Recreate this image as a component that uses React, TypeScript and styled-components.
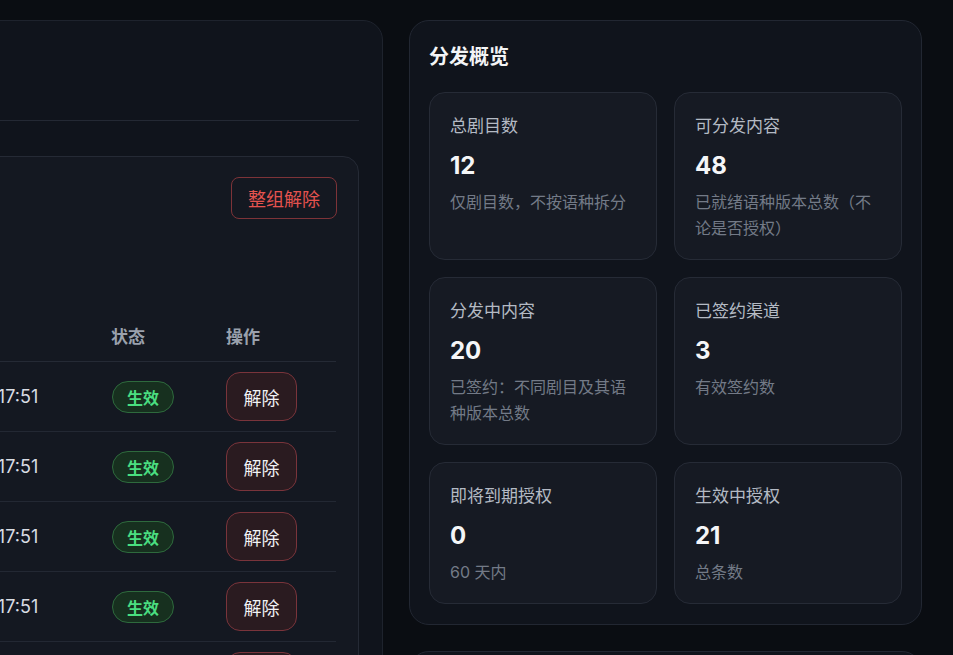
import { createGlobalStyle, styled } from 'styled-components'

const FONT = `Inter, 'Noto Sans CJK SC', 'Noto Sans', sans-serif`

const rows = [
  { time: '2025-06-18 17:51', status: '生效' },
  { time: '2025-06-18 17:51', status: '生效' },
  { time: '2025-06-18 17:51', status: '生效' },
  { time: '2025-06-18 17:51', status: '生效' },
  { time: '2025-06-18 17:51', status: '生效' },
]

const stats = [
  { label: '总剧目数', value: '12', note: '仅剧目数，不按语种拆分' },
  { label: '可分发内容', value: '48', note: '已就绪语种版本总数（不论是否授权）' },
  { label: '分发中内容', value: '20', note: '已签约：不同剧目及其语种版本总数' },
  { label: '已签约渠道', value: '3', note: '有效签约数' },
  { label: '即将到期授权', value: '0', note: '60 天内' },
  { label: '生效中授权', value: '21', note: '总条数' },
]

export default function App() {
  return (
    <>
      <GlobalStyle />
      <Page>
        <MainPanel>
          <PanelHeader />
          <GroupCard>
            <GroupTop>
              <GroupInfo />
              <DangerOutlineButton type="button">整组解除</DangerOutlineButton>
            </GroupTop>
            <Table>
              <HeadRow>
                <HeadCell>授权时间</HeadCell>
                <HeadCell>状态</HeadCell>
                <HeadCell>操作</HeadCell>
              </HeadRow>
              {rows.map((row, index) => (
                <BodyRow key={index}>
                  <TimeCell>{row.time}</TimeCell>
                  <Cell>
                    <StatusPill>{row.status}</StatusPill>
                  </Cell>
                  <Cell>
                    <ReleaseButton type="button">解除</ReleaseButton>
                  </Cell>
                </BodyRow>
              ))}
            </Table>
          </GroupCard>
        </MainPanel>

        <SideColumn>
          <OverviewPanel>
            <OverviewTitle>分发概览</OverviewTitle>
            <StatGrid>
              {stats.map((stat) => (
                <StatCard key={stat.label}>
                  <StatLabel>{stat.label}</StatLabel>
                  <StatValue>{stat.value}</StatValue>
                  <StatNote>{stat.note}</StatNote>
                </StatCard>
              ))}
            </StatGrid>
          </OverviewPanel>
          <NextPanel />
        </SideColumn>
      </Page>
    </>
  )
}

const GlobalStyle = createGlobalStyle`
  html,
  body {
    margin: 0;
    height: 100%;
    overflow: hidden;
    background: #0a0d12;
    font-family: ${FONT};
    color: #e5e7eb;
  }
`

const Page = styled.div`
  display: grid;
  grid-template-columns: 783px 513px;
  align-items: start;
  column-gap: 26px;
  width: 1322px;
  margin-left: -400px;
  padding-top: 20px;
`

const MainPanel = styled.section`
  height: 900px;
  padding: 0 23px;
  box-sizing: border-box;
  background: #10141c;
  border: 1px solid #1e232d;
  border-radius: 20px;
`

const PanelHeader = styled.div`
  height: 99px;
  border-bottom: 1px solid #242934;
`

const GroupCard = styled.div`
  margin-top: 35px;
  padding: 20px 22px 0;
  background: #141821;
  border: 1px solid #252a35;
  border-radius: 16px;
`

const GroupTop = styled.div`
  display: flex;
  justify-content: space-between;
  align-items: flex-start;
  height: 137px;
`

const GroupInfo = styled.div`
  flex: 1;
`

const DangerOutlineButton = styled.button`
  height: 42px;
  margin-right: -1px;
  padding: 0 16px;
  color: #e5534f;
  background: transparent;
  border: 1.5px solid #7d3338;
  border-radius: 8px;
  font-family: ${FONT};
  font-size: 18px;
  cursor: pointer;
`

const Table = styled.div`
  display: grid;
`

const HeadRow = styled.div`
  display: grid;
  grid-template-columns: 1fr 115px 110px;
  align-items: center;
  height: 48px;
  padding-bottom: 4px;
  box-sizing: border-box;
  border-bottom: 1px solid #252a35;
`

const HeadCell = styled.div`
  color: #9aa1ad;
  font-size: 17px;
  font-weight: 700;
`

const BodyRow = styled.div`
  display: grid;
  grid-template-columns: 1fr 115px 110px;
  align-items: center;
  height: 69px;
  border-bottom: 1px solid #232833;
`

const Cell = styled.div`
  display: flex;
  align-items: center;
`

const TimeCell = styled.div`
  padding-left: 244px;
  color: #d9dde4;
  font-size: 18px;
`

const StatusPill = styled.span`
  display: inline-flex;
  align-items: center;
  justify-content: center;
  width: 62px;
  height: 32px;
  margin-left: 1px;
  box-sizing: border-box;
  color: #4ade80;
  background: #17301f;
  border: 1.5px solid #2e6a3d;
  border-radius: 999px;
  font-size: 16px;
  font-weight: 700;
`

const ReleaseButton = styled.button`
  width: 71px;
  height: 49px;
  color: #f1f2f4;
  background: #2a1b20;
  border: 1.5px solid #7a343b;
  border-radius: 14px;
  font-family: ${FONT};
  font-size: 18px;
  cursor: pointer;
`

const SideColumn = styled.div`
  display: grid;
  gap: 26px;
`

const OverviewPanel = styled.section`
  padding: 20px 19px 20px;
  background: #10141c;
  border: 1px solid #222732;
  border-radius: 20px;
`

const OverviewTitle = styled.h2`
  margin: 0 0 19px;
  color: #f3f4f6;
  font-size: 20px;
  font-weight: 700;
  line-height: 32px;
`

const StatGrid = styled.div`
  display: grid;
  grid-template-columns: 1fr 1fr;
  gap: 17px;
`

const StatCard = styled.div`
  padding: 20px 20px 18px;
  background: #161a23;
  border: 1px solid #262b36;
  border-radius: 16px;
`

const StatLabel = styled.div`
  color: #b4bac4;
  font-size: 17px;
  line-height: 26px;
`

const StatValue = styled.div`
  margin-top: 12px;
  color: #f5f6f8;
  font-size: 24px;
  font-weight: 700;
  line-height: 30px;
`

const StatNote = styled.div`
  margin-top: 8px;
  color: #737a87;
  font-size: 16px;
  line-height: 26px;
`

const NextPanel = styled.section`
  height: 200px;
  background: #10141c;
  border: 1px solid #222732;
  border-radius: 20px;
`
